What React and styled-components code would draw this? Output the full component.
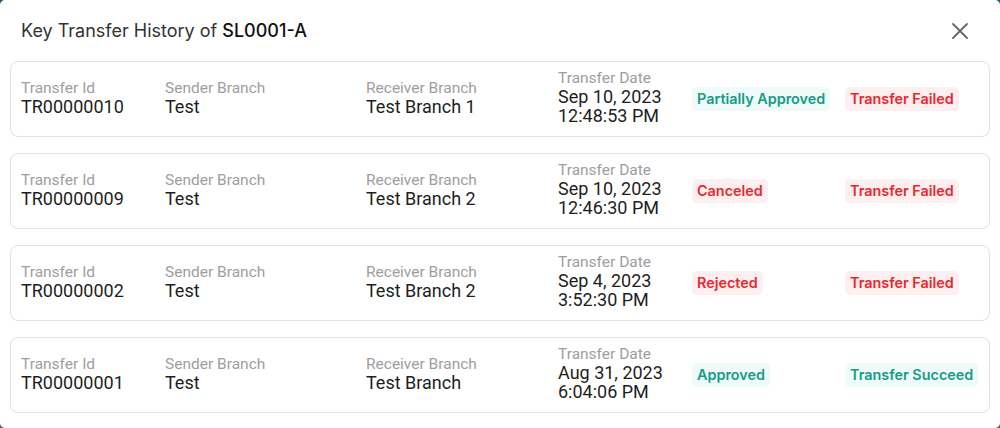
import React from "react";
import styled, { createGlobalStyle } from "styled-components";

const Global = createGlobalStyle`
  html, body { margin: 0; padding: 0; }
  body {
    width: 1000px;
    height: 428px;
    overflow: hidden;
    background: linear-gradient(180deg, #1b5a7e 0%, #3a4c5a 50%, #5a5a5a 100%);
    font-family: Roboto, "Noto Sans", sans-serif;
  }
`;

const Modal = styled.div`
  width: 1000px;
  height: 428px;
  box-sizing: border-box;
  background: #fff;
  border-radius: 5px;
  display: flex;
  flex-direction: column;
`;

const Header = styled.div`
  height: 61px;
  display: flex;
  align-items: center;
  justify-content: space-between;
  padding: 0 30px 0 21px;
  box-sizing: border-box;
`;

const Title = styled.h2`
  margin: 0;
  font-family: Inter, sans-serif;
  font-weight: 400;
  font-size: 18px;
  color: #333;
  padding-bottom: 1px;
  strong { font-weight: 500; color: #111; }
`;

const Close = styled.button`
  border: 0;
  background: none;
  padding: 0;
  width: 20px;
  height: 20px;
  display: flex;
  align-items: center;
  justify-content: center;
  cursor: pointer;
`;

const List = styled.div`
  display: flex;
  flex-direction: column;
  gap: 16px;
  padding: 0 10px;
`;

const Card = styled.div`
  height: 76px;
  box-sizing: border-box;
  border: 1px solid #e2e2e2;
  border-radius: 8px;
  padding: 0 10px;
  display: grid;
  grid-template-columns: 144px 201px 192px 134px 153px 1fr;
  align-items: center;
`;

const Field = styled.div`
  display: flex;
  flex-direction: column;
  margin-top: -3px;
`;

const Label = styled.div`
  font-size: 15.5px;
  line-height: 17px;
  color: #9e9e9e;
`;

const Value = styled.div`
  font-size: 18px;
  line-height: 19px;
  color: #1e1e1e;
`;

const BadgeCell = styled.div`
  display: flex;
`;

const Badge = styled.span`
  font-family: Inter, sans-serif;
  font-weight: 600;
  font-size: 14.4px;
  height: 24px;
  line-height: 24px;
  padding: 0 5px;
  border-radius: 5px;
  color: ${(p) => (p.$tone === "green" ? "#169c86" : "#e5292f")};
  background: ${(p) => (p.$tone === "green" ? "#eefbf8" : "#fdeeef")};
`;

const rows = [
  { id: "TR00000010", sender: "Test", receiver: "Test Branch 1", date: "Sep 10, 2023", time: "12:48:53 PM", s1: ["Partially Approved", "green"], s2: ["Transfer Failed", "red"] },
  { id: "TR00000009", sender: "Test", receiver: "Test Branch 2", date: "Sep 10, 2023", time: "12:46:30 PM", s1: ["Canceled", "red"], s2: ["Transfer Failed", "red"] },
  { id: "TR00000002", sender: "Test", receiver: "Test Branch 2", date: "Sep 4, 2023", time: "3:52:30 PM", s1: ["Rejected", "red"], s2: ["Transfer Failed", "red"] },
  { id: "TR00000001", sender: "Test", receiver: "Test Branch", date: "Aug 31, 2023", time: "6:04:06 PM", s1: ["Approved", "green"], s2: ["Transfer Succeed", "green"] },
];

export default function App() {
  return (
    <>
      <Global />
      <Modal>
        <Header>
          <Title>
            Key Transfer History of <strong>SL0001-A</strong>
          </Title>
          <Close aria-label="close">
            <svg width="18" height="18" viewBox="0 0 18 18">
              <path d="M2 2L16 16M16 2L2 16" stroke="#666" strokeWidth="1.8" strokeLinecap="round" />
            </svg>
          </Close>
        </Header>
        <List>
          {rows.map((r) => (
            <Card key={r.id}>
              <Field>
                <Label>Transfer Id</Label>
                <Value>{r.id}</Value>
              </Field>
              <Field>
                <Label>Sender Branch</Label>
                <Value>{r.sender}</Value>
              </Field>
              <Field>
                <Label>Receiver Branch</Label>
                <Value>{r.receiver}</Value>
              </Field>
              <Field>
                <Label>Transfer Date</Label>
                <Value>{r.date}</Value>
                <Value>{r.time}</Value>
              </Field>
              <BadgeCell>
                <Badge $tone={r.s1[1]}>{r.s1[0]}</Badge>
              </BadgeCell>
              <BadgeCell>
                <Badge $tone={r.s2[1]}>{r.s2[0]}</Badge>
              </BadgeCell>
            </Card>
          ))}
        </List>
      </Modal>
    </>
  );
}
